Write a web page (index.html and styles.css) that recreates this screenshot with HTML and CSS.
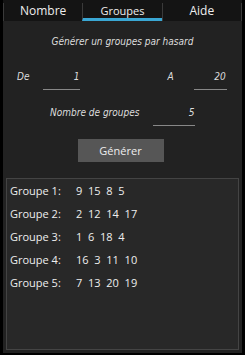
FILE: index.html
```html
<!DOCTYPE html>
<html lang="fr">
<head>
    <meta charset="UTF-8">
    <link rel="stylesheet" href="styles.css">
</head>
<body>
    <div class="tabs">
        <div class="tab">Nombre</div>
        <div class="tab active">Groupes</div>
        <div class="tab">Aide</div>
    </div>
    <div class="panel">
        <p class="title">Générer un groupes par hasard</p>
        <div class="range">
            <span class="lbl">De</span>
            <span class="field f1">1</span>
            <span class="lbl la">A</span>
            <span class="field f2">20</span>
        </div>
        <div class="count">
            <span class="lbl">Nombre de groupes</span>
            <span class="field f3">5</span>
        </div>
        <div class="btnrow"><button class="gen">Générer</button></div>
        <div class="list">
            <div class="row"><span class="name">Groupe 1:</span><span>9&nbsp; 15&nbsp; 8&nbsp; 5</span></div>
            <div class="row"><span class="name">Groupe 2:</span><span>2&nbsp; 12&nbsp; 14&nbsp; 17</span></div>
            <div class="row"><span class="name">Groupe 3:</span><span>1&nbsp; 6&nbsp; 18&nbsp; 4</span></div>
            <div class="row"><span class="name">Groupe 4:</span><span>16&nbsp; 3&nbsp; 11&nbsp; 10</span></div>
            <div class="row"><span class="name">Groupe 5:</span><span>7&nbsp; 13&nbsp; 20&nbsp; 19</span></div>
        </div>
    </div>
</body>
</html>
```

FILE: styles.css
```css
*{
    box-sizing: border-box;
}
html, body{
    margin: 0;
    height: 100%;
    background-color: #000;
}
body{
    display: flex;
    flex-direction: column;
    padding: 0 3px 2px 3px;
    font-family: "Open Sans", "DejaVu Sans", sans-serif;
    color: #eee;
}
.tabs{
    display: flex;
    height: 21px;
    background-color: #141414;
    padding-top: 3px;
}
.tab{
    flex: 1;
    text-align: center;
    font-size: 12px;
    line-height: 15px;
    border-left: 1px solid #3a3a3a;
}
.tab:last-child{
    border-right: 1px solid #3a3a3a;
}
.tab.active{
    border-bottom: 3px solid #3aa7d4;
    font-size: 11px;
}
.panel{
    flex: 1;
    display: flex;
    flex-direction: column;
    background-color: #222;
    padding: 0 3px 3px 3px;
}
.title, .lbl, .field{
    font-family: "DejaVu Sans Condensed", "DejaVu Sans", sans-serif;
    font-style: italic;
    font-size: 10px;
    color: #ddd;
}
.title{
    margin: 15px 0 0 0;
    text-align: center;
}
.field{
    display: inline-block;
    text-align: right;
    border-bottom: 1px solid #888;
    padding: 0 1px 7px 0;
}
.range{
    display: flex;
    align-items: flex-start;
    margin-top: 24px;
    padding-left: 11px;
}
.f1{
    width: 37px;
    margin-left: 14px;
}
.la{
    margin-left: 87px;
}
.f2{
    width: 33px;
    margin-left: 20px;
}
.count{
    display: flex;
    margin-top: 17px;
    padding-left: 44px;
}
.f3{
    width: 42px;
    margin-left: 14px;
}
.btnrow{
    display: flex;
    justify-content: center;
    margin-top: 13px;
}
.gen{
    width: 86px;
    height: 23px;
    margin-right: 4px;
    border: none;
    background-color: #565656;
    color: #eee;
    font-family: "Open Sans", sans-serif;
    font-size: 11px;
}
.list{
    flex: 1;
    margin-top: 16px;
    background-color: #282828;
    border: 1px solid #444;
    padding: 0 0 0 3px;
}
.row{
    display: flex;
    font-size: 11px;
    line-height: 23px;
}
.name{
    width: 66px;
}
```
